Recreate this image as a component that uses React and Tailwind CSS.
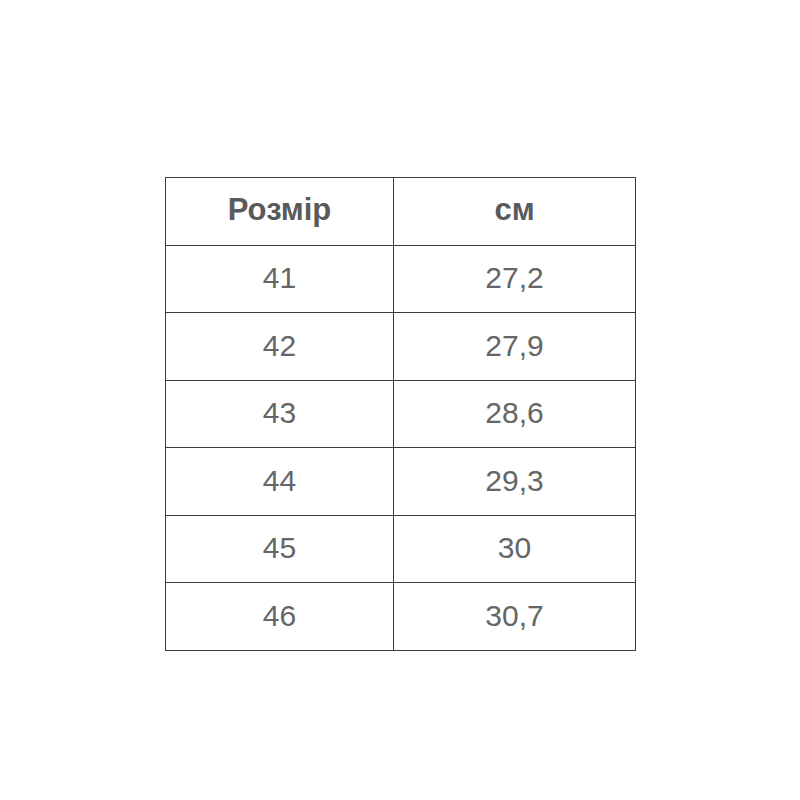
const rows = [
  ['41', '27,2'],
  ['42', '27,9'],
  ['43', '28,6'],
  ['44', '29,3'],
  ['45', '30'],
  ['46', '30,7'],
];

export default function App() {
  return (
    <div
      className="w-[800px] h-[800px] bg-white pt-[177px] pl-[165px]"
      style={{fontFamily: '"Liberation Sans", Arial, sans-serif'}}
    >
      <div className="w-[471px] border-t border-l border-[#3c3c3c]">
        {/* Header */}
        <div className="flex h-[67.5px]">
          <div className="w-[228px] flex items-center justify-center pb-[2px] border-r border-b border-[#3c3c3c] text-[31px] font-bold text-[#5a5a5a]">
            Розмір
          </div>
          <div className="flex-1 flex items-center justify-center pb-[2px] border-r border-b border-[#3c3c3c] text-[31px] font-bold text-[#5a5a5a]">
            см
          </div>
        </div>

        {rows.map(([size, cm]) => (
          <div key={size} className="flex h-[67.5px]">
            <div className="w-[228px] flex items-center justify-center pb-[2px] border-r border-b border-[#3c3c3c] text-[30px] text-[#666]">
              {size}
            </div>
            <div className="flex-1 flex items-center justify-center pb-[2px] border-r border-b border-[#3c3c3c] text-[30px] text-[#666]">
              {cm}
            </div>
          </div>
        ))}
      </div>
    </div>
  );
}
